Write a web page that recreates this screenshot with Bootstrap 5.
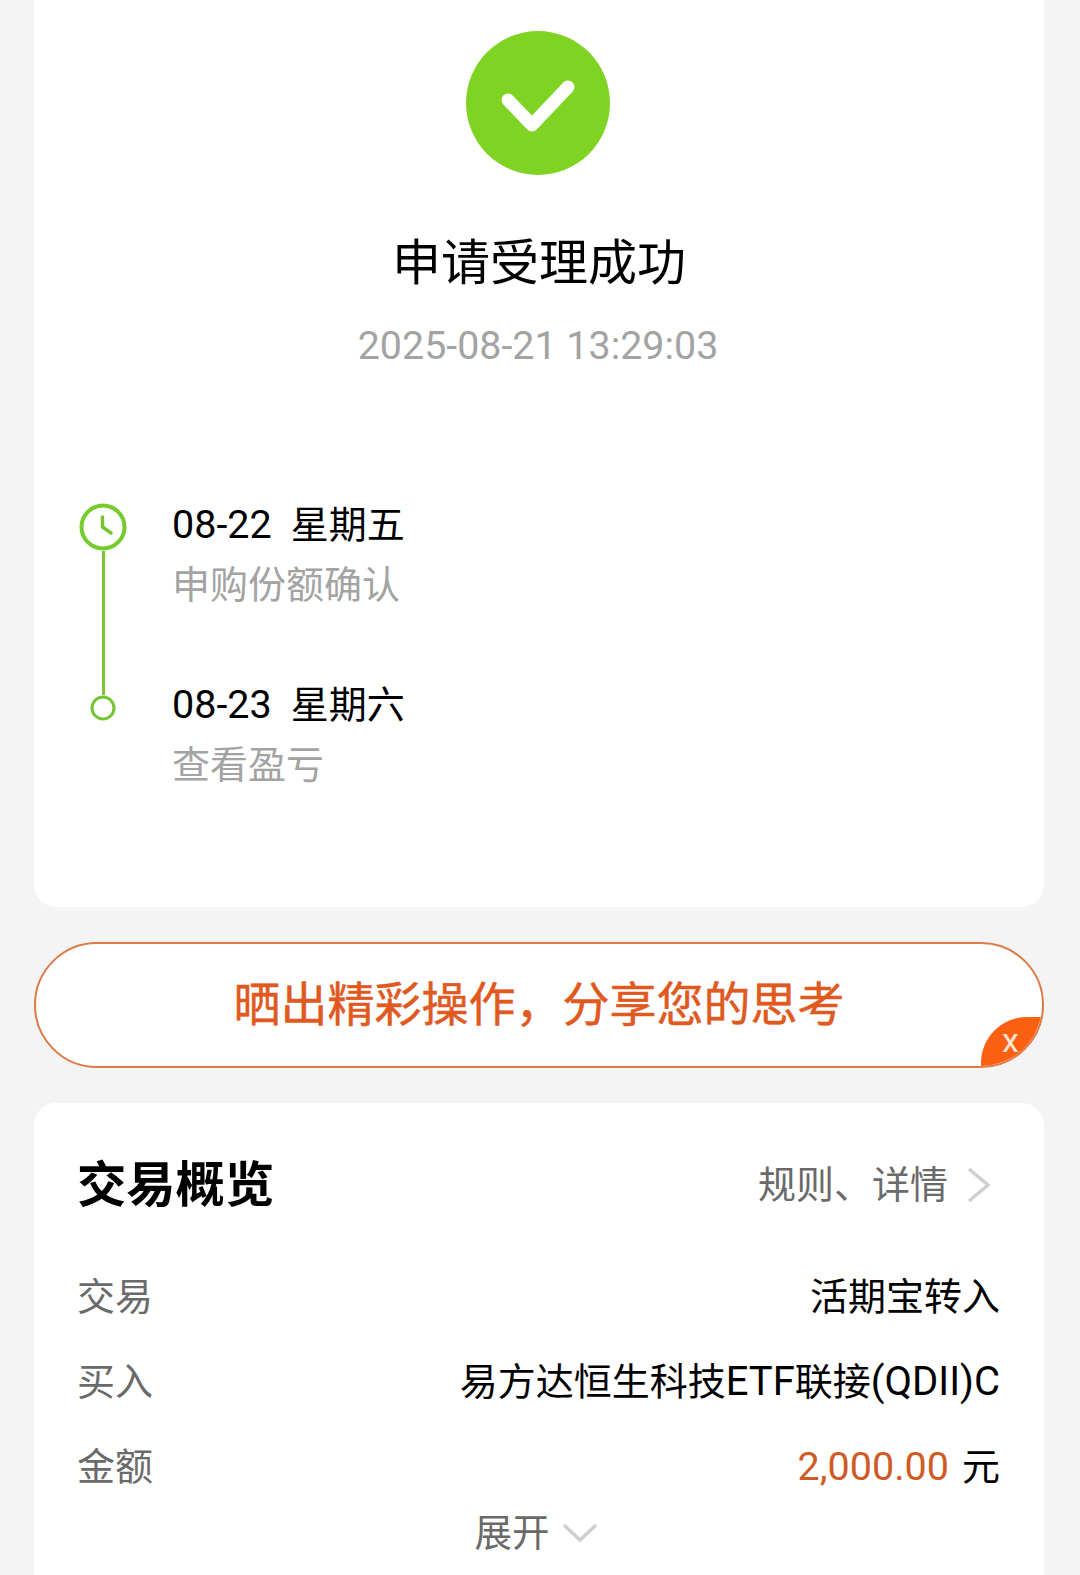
<!DOCTYPE html>
<html lang="zh">
<head>
<meta charset="utf-8">
<title>申请受理成功</title>
<link href="https://cdn.jsdelivr.net/npm/bootstrap@5.3.0/dist/css/bootstrap.min.css" rel="stylesheet">
<style>
html,body{height:1575px;overflow:hidden}
body{background:#f4f4f4;font-family:Roboto,"Noto Sans CJK SC",sans-serif;color:#000;padding:0 36px 0 34px}
.panel-top{height:907px;background:#fff;border-radius:0 0 22px 22px;padding-top:31px}
.ok-icon{width:144px;height:144px;display:block;margin-right:2px}
.ok-title{font-size:49px;line-height:60px;margin-top:59px}
.ok-time{font-size:39.4px;line-height:46px;color:#a3a3a3;margin-top:29px;padding-right:2px}
.steps{margin-top:133px;padding-left:45px}
.step-rail{width:48px;flex:none;margin-top:1px}
.step-line{width:3px;height:144px;background:#7cc43a}
.step-body{margin-left:45px}
.step-date{font-size:38px;line-height:46px}
.step-num{font-size:39.5px;margin-right:19px}
.step-note{font-size:38px;line-height:46px;color:#a3a3a3;margin-top:14px}
.step-gap{height:74px}
.share-bar{height:126px;margin-top:35px;background:#fff;border:2px solid #dd7a48;border-radius:63px;font-size:47px;color:#e0591f;-webkit-text-stroke:.5px #e0591f;overflow:hidden}
.share-close{right:-1px;bottom:-1px;width:62px;height:50px;background:#fb5f12;color:#ffe6d2;-webkit-text-stroke:0;border-radius:46px 0 0 0;font-size:34px;line-height:47px;padding-left:21px}
.panel-info{background:#fff;border-radius:22px 22px 0 0;margin-top:35px;height:480px;padding:52px 44px 0 43px}
.info-title{font-size:49.3px;line-height:60px;font-weight:700}
.info-link{font-size:38px;line-height:46px;color:#6a6a6a}
.info-chevron{width:26px;height:38px;margin-left:18px;margin-right:8px}
.info-row{font-size:38px;line-height:46px}
.info-row-first{margin-top:59px}
.info-row-next{margin-top:39px}
.info-label{color:#6a6a6a}
.latin{font-size:40px}
.money{color:#cf5a24;font-size:39.5px}
.unit{margin-left:13px}
.more-row{font-size:37.5px;line-height:46px;color:#6a6a6a;margin-top:20px;padding-right:5px}
.more-chevron{width:36px;height:22px;margin-left:12px}
</style>
</head>
<body>
<section class="panel-top d-flex flex-column">
  <svg class="ok-icon align-self-center" viewBox="0 0 144 144" role="img" aria-label="成功"><circle cx="72" cy="72" r="72" fill="#7fd322"/><path d="M42 69 66 94 102 56" fill="none" stroke="#fff" stroke-width="13" stroke-linecap="round" stroke-linejoin="round"/></svg>
  <div class="ok-title text-center">申请受理成功</div>
  <div class="ok-time text-center">2025-08-21 13:29:03</div>
  <div class="steps d-flex">
    <div class="step-rail d-flex flex-column align-items-center">
      <svg width="48" height="48" viewBox="0 0 48 48" role="img" aria-label="时钟"><circle cx="24" cy="24" r="21.500" fill="#fff" stroke="#76cc2c" stroke-width="4"/><path d="M23.500 14V24L32 30" fill="none" stroke="#76c432" stroke-width="3.500" stroke-linecap="round" stroke-linejoin="round"/></svg>
      <div class="step-line"></div>
      <svg width="26" height="26" viewBox="0 0 26 26" role="img" aria-label="节点"><circle cx="13" cy="13" r="11" fill="#fff" stroke="#76c432" stroke-width="3"/></svg>
    </div>
    <div class="step-body">
      <div class="step-date"><span class="step-num">08-22</span>星期五</div>
      <div class="step-note">申购份额确认</div>
      <div class="step-gap"></div>
      <div class="step-date"><span class="step-num">08-23</span>星期六</div>
      <div class="step-note">查看盈亏</div>
    </div>
  </div>
</section>
<section class="share-bar position-relative d-flex align-items-center justify-content-center">
  <span>晒出精彩操作，分享您的思考</span>
  <span class="share-close position-absolute">x</span>
</section>
<section class="panel-info">
  <div class="d-flex justify-content-between align-items-center">
    <div class="info-title">交易概览</div>
    <div class="d-flex align-items-center info-link">规则、详情<svg class="info-chevron" viewBox="0 0 26 38" aria-hidden="true"><path d="M3 3 22 19 3 35" fill="none" stroke="#cfcfcf" stroke-width="3.500"/></svg></div>
  </div>
  <div class="info-row info-row-first d-flex justify-content-between"><span class="info-label">交易</span><span>活期宝转入</span></div>
  <div class="info-row info-row-next d-flex justify-content-between"><span class="info-label">买入</span><span>易方达恒生科技<span class="latin">ETF</span>联接<span class="latin">(QDII)C</span></span></div>
  <div class="info-row info-row-next d-flex justify-content-between"><span class="info-label">金额</span><span><span class="money">2,000.00</span><span class="unit">元</span></span></div>
  <div class="more-row d-flex justify-content-center align-items-center">展开<svg class="more-chevron" viewBox="0 0 36 22" aria-hidden="true"><path d="M2 3 18 18 34 3" fill="none" stroke="#cfcfcf" stroke-width="3.500"/></svg></div>
</section>
</body>
</html>
